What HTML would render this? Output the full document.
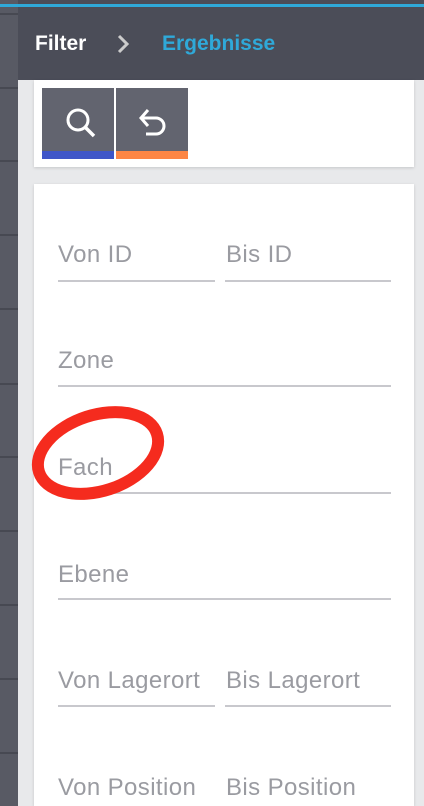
<html><head><style>
html,body{margin:0;width:424px;height:806px;overflow:hidden}
body{background:#e8e9eb;font-family:"Liberation Sans",Roboto,sans-serif;position:relative}
.sb{position:absolute;left:0;top:0;width:18px;height:806px;background:#585a64}
.sep{position:absolute;left:0;width:18px;height:2px;background:#474952}
.top{position:absolute;left:0;top:4px;width:424px;height:3px;background:#2fa9d9}
.hd{position:absolute;left:18px;top:7px;width:406px;height:73px;background:#4b4d58;color:#fff;font-size:21px;font-weight:bold}
.card{position:absolute;background:#fff;box-shadow:0 1px 3px rgba(0,0,0,.15)}
.btn{position:absolute;top:88px;width:72px;height:71px;background:#62646f}
.lbl{position:absolute;font-size:24px;letter-spacing:0.4px;color:#9a9ba1}
.ln{position:absolute;height:2px;background:#c8c8cd}
</style></head><body>
<div style="position:absolute;left:0;top:0;width:424px;height:4px;background:#4b4d58"></div>
<div class="sb"></div>
<div class="sep" style="top:13px"></div><div class="sep" style="top:87px"></div><div class="sep" style="top:160px"></div><div class="sep" style="top:234px"></div><div class="sep" style="top:308px"></div><div class="sep" style="top:383px"></div><div class="sep" style="top:456px"></div><div class="sep" style="top:530px"></div><div class="sep" style="top:604px"></div><div class="sep" style="top:678px"></div><div class="sep" style="top:752px"></div>
<div class="top"></div>
<div class="hd"><span style="position:absolute;left:17px;top:25px">Filter</span>
<svg style="position:absolute;left:98px;top:26px" width="16" height="22"><path d="M3 3 L11 11 L3 19" stroke="#ccc" stroke-width="3" fill="none"/></svg>
<span style="position:absolute;left:144px;top:25px;color:#2fa9d9">Ergebnisse</span></div>
<div class="card" style="left:34px;top:80px;width:380px;height:87px"></div>
<div class="btn" style="left:42px"><div style="position:absolute;bottom:0;left:0;right:0;height:8px;background:#3f56c8"></div>
<svg width="72" height="63"><circle cx="36" cy="32" r="10" stroke="#fff" stroke-width="3" fill="none"/><path d="M43 39 L52 48" stroke="#fff" stroke-width="3.5"/></svg></div>
<div class="btn" style="left:116px"><div style="position:absolute;bottom:0;left:0;right:0;height:8px;background:#fd8645"></div>
<svg width="72" height="63"><path d="M26 30 H40 A8 8 0 0 1 40 46 H30" stroke="#fff" stroke-width="3" fill="none"/><path d="M32 22 L25 30 L32 38" stroke="#fff" stroke-width="3" fill="none"/></svg></div>
<div class="card" style="left:34px;top:184px;width:380px;height:622px"></div>
<div class="lbl" style="left:58px;top:241px">Von ID</div><div class="ln" style="left:58px;top:280px;width:157px"></div>
<div class="lbl" style="left:226px;top:241px">Bis ID</div><div class="ln" style="left:225px;top:280px;width:166px"></div>
<div class="lbl" style="left:58px;top:347px">Zone</div><div class="ln" style="left:58px;top:385px;width:333px"></div>
<div class="lbl" style="left:58px;top:454px">Fach</div><div class="ln" style="left:58px;top:492px;width:333px"></div>
<div class="lbl" style="left:58px;top:561px">Ebene</div><div class="ln" style="left:58px;top:598px;width:333px"></div>
<div class="lbl" style="left:58px;top:667px">Von Lagerort</div><div class="ln" style="left:58px;top:705px;width:157px"></div>
<div class="lbl" style="left:226px;top:667px">Bis Lagerort</div><div class="ln" style="left:225px;top:705px;width:166px"></div>
<div class="lbl" style="left:58px;top:774px">Von Position</div><div class="lbl" style="left:226px;top:774px">Bis Position</div>
<svg style="position:absolute;left:0;top:0" width="424" height="806"><ellipse cx="98" cy="453" rx="62" ry="38" transform="rotate(-18 98 453)" stroke="#f52b1e" stroke-width="12" fill="none"/></svg>
</body></html>
